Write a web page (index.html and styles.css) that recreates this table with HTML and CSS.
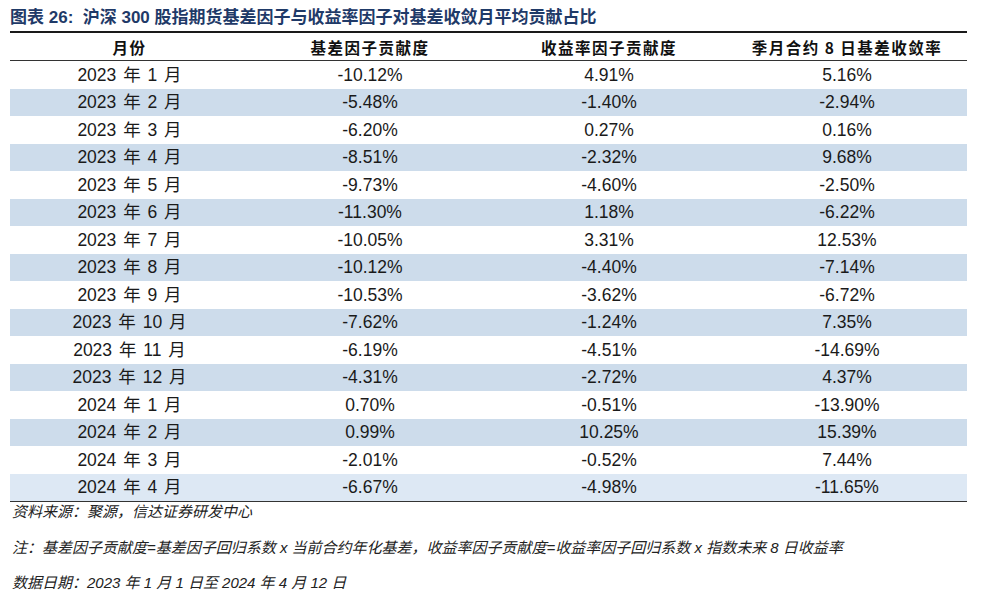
FILE: index.html
```html
<!DOCTYPE html>
<html lang="zh">
<head>
<meta charset="utf-8">
<link rel="stylesheet" href="styles.css">
</head>
<body>
<div class="page">
  <div class="title">图表 26:&nbsp; 沪深 300 股指期货基差因子与收益率因子对基差收敛月平均贡献占比</div>
  <table class="data">
    <colgroup>
      <col class="c1"><col class="c2"><col class="c3"><col class="c4">
    </colgroup>
    <thead>
      <tr><th>月份</th><th>基差因子贡献度</th><th>收益率因子贡献度</th><th>季月合约 8 日基差收敛率</th></tr>
    </thead>
    <tbody>
      <tr><td class="m">2023 年 1 月</td><td>-10.12%</td><td>4.91%</td><td>5.16%</td></tr>
      <tr class="band"><td class="m">2023 年 2 月</td><td>-5.48%</td><td>-1.40%</td><td>-2.94%</td></tr>
      <tr><td class="m">2023 年 3 月</td><td>-6.20%</td><td>0.27%</td><td>0.16%</td></tr>
      <tr class="band"><td class="m">2023 年 4 月</td><td>-8.51%</td><td>-2.32%</td><td>9.68%</td></tr>
      <tr><td class="m">2023 年 5 月</td><td>-9.73%</td><td>-4.60%</td><td>-2.50%</td></tr>
      <tr class="band"><td class="m">2023 年 6 月</td><td>-11.30%</td><td>1.18%</td><td>-6.22%</td></tr>
      <tr><td class="m">2023 年 7 月</td><td>-10.05%</td><td>3.31%</td><td>12.53%</td></tr>
      <tr class="band"><td class="m">2023 年 8 月</td><td>-10.12%</td><td>-4.40%</td><td>-7.14%</td></tr>
      <tr><td class="m">2023 年 9 月</td><td>-10.53%</td><td>-3.62%</td><td>-6.72%</td></tr>
      <tr class="band"><td class="m">2023 年 10 月</td><td>-7.62%</td><td>-1.24%</td><td>7.35%</td></tr>
      <tr><td class="m">2023 年 11 月</td><td>-6.19%</td><td>-4.51%</td><td>-14.69%</td></tr>
      <tr class="band"><td class="m">2023 年 12 月</td><td>-4.31%</td><td>-2.72%</td><td>4.37%</td></tr>
      <tr><td class="m">2024 年 1 月</td><td>0.70%</td><td>-0.51%</td><td>-13.90%</td></tr>
      <tr class="band"><td class="m">2024 年 2 月</td><td>0.99%</td><td>10.25%</td><td>15.39%</td></tr>
      <tr><td class="m">2024 年 3 月</td><td>-2.01%</td><td>-0.52%</td><td>7.44%</td></tr>
      <tr class="band last"><td class="m">2024 年 4 月</td><td>-6.67%</td><td>-4.98%</td><td>-11.65%</td></tr>
    </tbody>
  </table>
  <div class="notes">
    <p>资料来源：聚源，信达证券研发中心</p>
    <p>注：基差因子贡献度=基差因子回归系数 x 当前合约年化基差，收益率因子贡献度=收益率因子回归系数 x 指数未来 8 日收益率</p>
    <p>数据日期：2023 年 1 月 1 日至 2024 年 4 月 12 日</p>
  </div>
</div>
</body>
</html>
```

FILE: styles.css
```css
html, body {
  margin: 0;
  padding: 0;
  background: #ffffff;
}
.page {
  padding: 6px 0 0 10px;
  width: 957px;
  font-family: "Liberation Sans", Arial, "Noto Sans CJK SC", sans-serif;
  color: #1a1a1a;
}
.title {
  font-family: "Liberation Sans", Arial, "Noto Sans CJK SC", sans-serif;
  font-weight: bold;
  font-size: 17px;
  line-height: 24px;
  height: 24px;
  color: #1f3a68;
  margin-bottom: 1px;
  white-space: nowrap;
}
.data {
  width: 957px;
  border-collapse: collapse;
  table-layout: fixed;
  border-top: 2px solid #1a1a1a;
  border-bottom: 1.5px solid #333333;
}
.c1 { width: 239px; }
.c2 { width: 242px; }
.c3 { width: 236px; }
.c4 { width: 240px; }
.data th {
  font-family: "Noto Sans CJK SC", sans-serif;
  font-weight: 700;
  font-size: 15.5px;
  letter-spacing: 1.5px;
  height: 27px;
  padding: 0;
  text-align: center;
  border-bottom: 1px solid #333333;
  color: #111111;
}
.data td {
  font-size: 17.5px;
  height: 27.5px;
  padding: 0;
  text-align: center;
  line-height: 20px;
  color: #1a1a1a;
}
.data td.m {
  word-spacing: 2px;
}
.data tr.band td {
  background: #cddceb;
}
.data tr.last td {
  background: #dde8f4;
}
.notes {
  font-family: "Liberation Sans", Arial, "Noto Sans CJK SC", sans-serif;
  font-style: italic;
  font-size: 15px;
  color: #222222;
  padding-left: 2px;
}
.notes p {
  margin: 0;
  height: 34.5px;
  line-height: 18px;
  padding-top: 1px;
  white-space: nowrap;
}
```
